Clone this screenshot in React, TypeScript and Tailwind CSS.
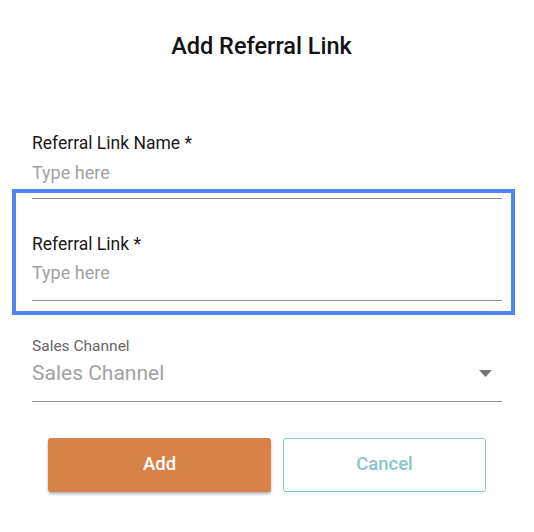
export default function App() {
  return (
    <div className="w-[534px] h-[532px] bg-white pt-[30px] font-['Roboto','Liberation_Sans',sans-serif]">
      {/* Dialog title */}
      <h1 className="text-center pr-[11px] text-[23.5px] leading-[32px] font-medium text-[#111]">Add Referral Link</h1>

      <div className="px-[32px]">
        {/* Referral Link Name */}
        <div className="mt-[69px]">
          <label className="block text-[17.5px] leading-[24px] text-[#1a1a1a]">Referral Link Name *</label>
          <input
            placeholder="Type here"
            className="block w-full pt-[5px] pb-[14px] h-[44px] text-[18px] leading-[24px] border-b border-[#8f8f8f] outline-none placeholder:text-[#a2a2a2]"
          />
        </div>

        {/* Referral Link (focused) */}
        <div className="relative mt-[33px]">
          <div className="absolute -top-[43px] -left-[20px] -right-[13px] -bottom-[14px] border-4 border-[#4f86ef] pointer-events-none" />
          <label className="block text-[17.5px] leading-[24px] text-[#1a1a1a]">Referral Link *</label>
          <input
            placeholder="Type here"
            className="block w-full pt-[4px] pb-[16px] h-[45px] text-[18px] leading-[24px] border-b border-[#8f8f8f] outline-none placeholder:text-[#a2a2a2]"
          />
        </div>

        {/* Sales Channel select */}
        <div className="mt-[35px]">
          <label className="block text-[15.5px] leading-[20px] text-[#666]">Sales Channel</label>
          <div className="flex items-center justify-between mt-[3px] pb-[14px] border-b border-[#8f8f8f]">
            <span className="text-[21px] leading-[28px] text-[#a2a2a2]">Sales Channel</span>
            <svg width="13" height="7" viewBox="0 0 13 7" className="mr-[10px] mt-[1px]">
              <path d="M0 0h13L6.5 7z" fill="#757575" />
            </svg>
          </div>
        </div>
      </div>

      {/* Actions */}
      <div className="flex gap-[12px] px-[48px] mt-[36px]">
        <button className="w-[223px] h-[54px] rounded-[3px] bg-[#d8824a] text-white text-[18.5px] font-medium shadow-[0_2px_3px_rgba(0,0,0,0.3)]">
          Add
        </button>
        <button className="w-[203px] h-[54px] rounded-[3px] border border-[#86c6cb] text-[#86c6cb] text-[18.5px] font-medium bg-white">
          Cancel
        </button>
      </div>
    </div>
  );
}
